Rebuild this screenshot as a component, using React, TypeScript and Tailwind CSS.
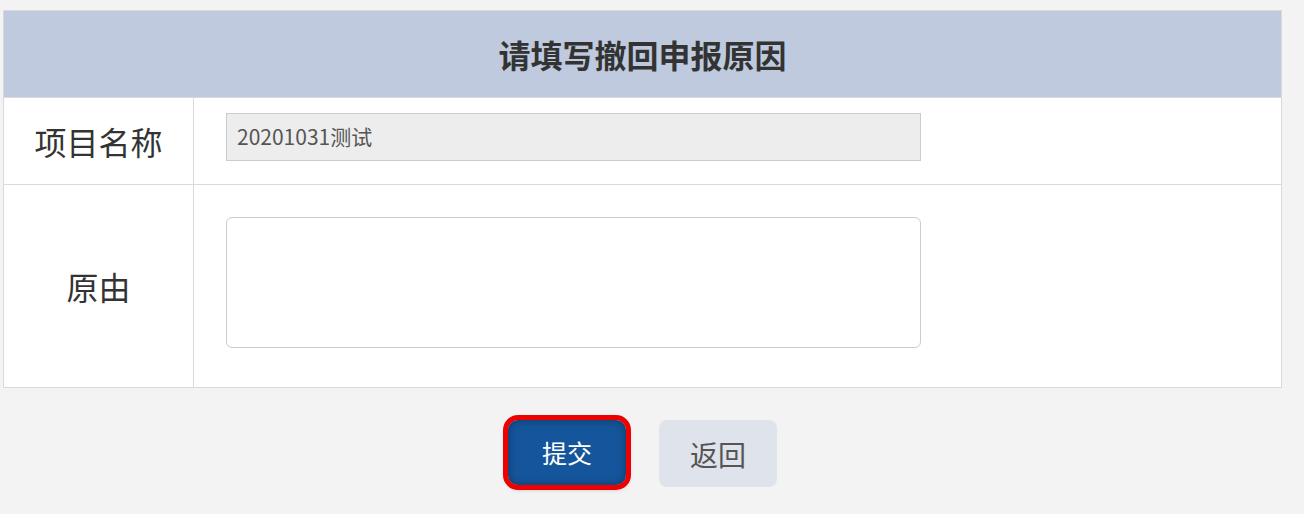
import React from 'react';

const font = { fontFamily: '"Noto Sans CJK SC", "Noto Sans", sans-serif' };

export default function App() {
  return (
    <div className="min-h-screen w-[1304px] h-[514px] bg-[#f3f3f3] pt-[10px] pl-[3px]" style={font}>
      <div className="w-[1279px] border border-[#dadada] bg-white">
        {/* header */}
        <div className="h-[86px] bg-[#bfcadf] flex items-center justify-center">
          <h1 className="text-[32px] font-bold text-[#333] leading-none">请填写撤回申报原因</h1>
        </div>

        {/* row: project name */}
        <div className="flex h-[87px] border-t border-[#dadada]">
          <div className="w-[190px] shrink-0 border-r border-[#dadada] flex items-center justify-center">
            <span className="text-[32px] text-[#333]">项目名称</span>
          </div>
          <div className="flex-1 pl-[32px] pt-[15px]">
            <div className="w-[695px] h-[48px] bg-[#ededed] border border-[#cccccc] flex items-center px-[10px]">
              <span className="text-[21px] text-[#555]">20201031测试</span>
            </div>
          </div>
        </div>

        {/* row: reason */}
        <div className="flex h-[203px] border-t border-[#dadada]">
          <div className="w-[190px] shrink-0 border-r border-[#dadada] flex items-center justify-center">
            <span className="text-[32px] text-[#333]">原由</span>
          </div>
          <div className="flex-1 pl-[32px] pt-[32px]">
            <textarea className="w-[695px] h-[131px] border border-[#cccccc] rounded-[6px] resize-none outline-none bg-white" />
          </div>
        </div>
      </div>

      {/* buttons */}
      <div className="w-[1279px] flex justify-center gap-[33px] mt-[32px]">
        <button className="w-[118px] h-[65px] rounded-[10px] bg-[#15559b] text-white text-[25px] outline-[5px] outline-solid outline-[#ee0000] shadow-[0_2px_6px_rgba(0,0,0,0.5),inset_0_0_8px_rgba(0,0,0,0.35)]">
          提交
        </button>
        <button className="w-[118px] h-[67px] rounded-[8px] bg-[#dfe3eb] text-[#555] text-[28px]">
          返回
        </button>
      </div>
    </div>
  );
}
